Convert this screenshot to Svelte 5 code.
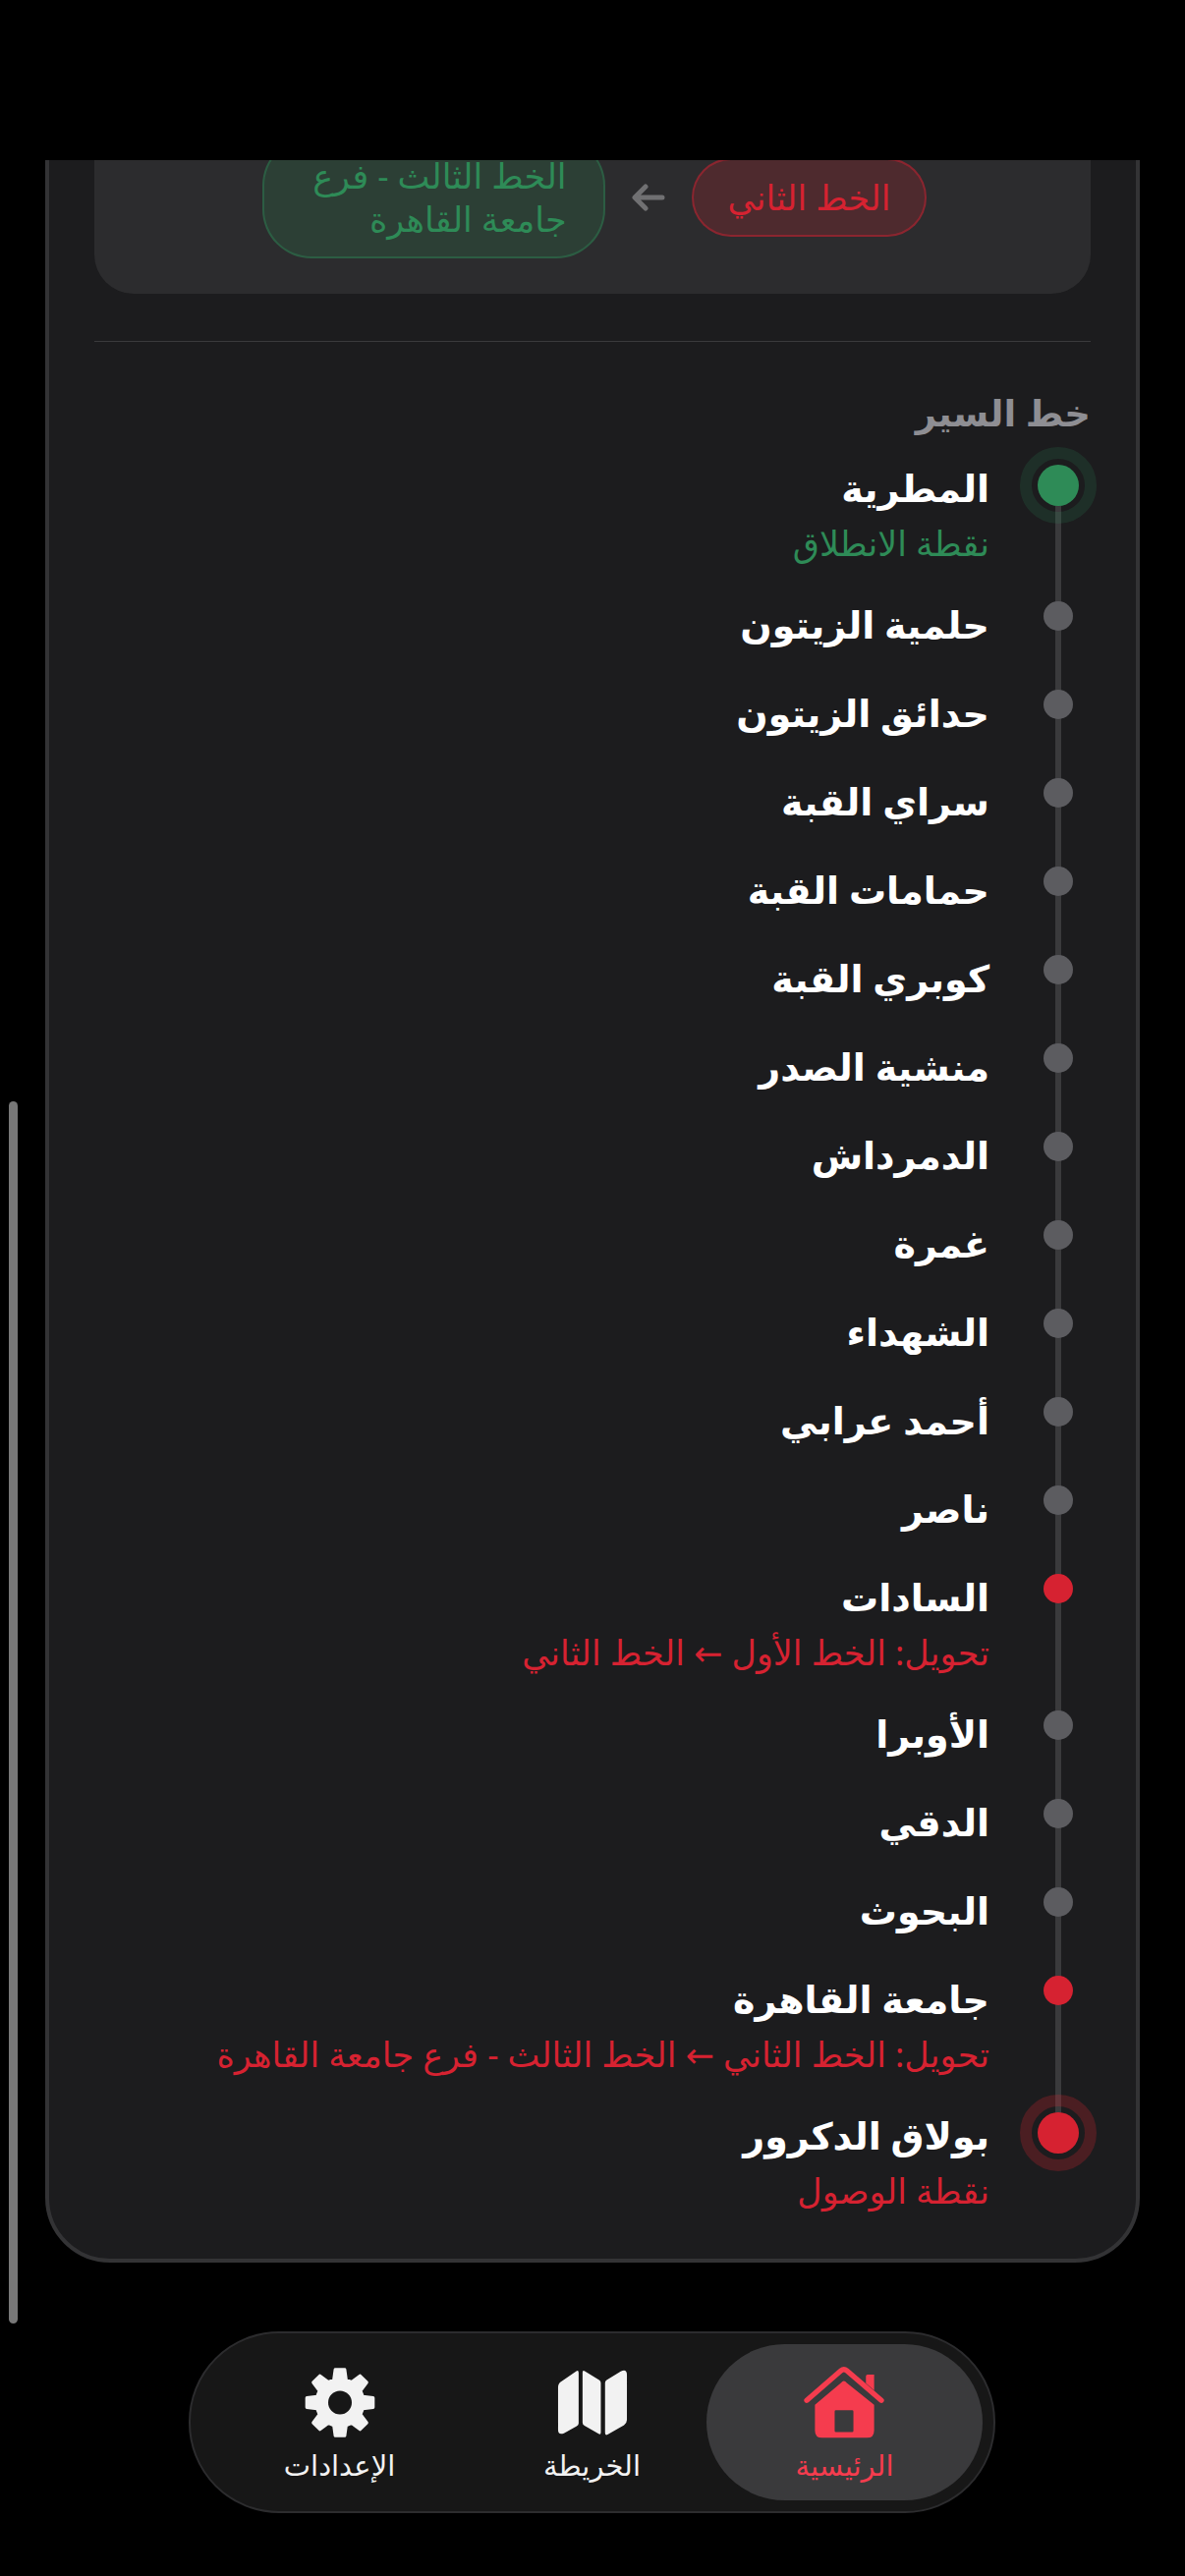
<script lang="ts">
	type Kind = 'start' | 'normal' | 'transfer' | 'end';

	interface Station {
		name: string;
		kind?: Kind;
		note?: string;
	}

	const stations: Station[] = [
		{ name: 'المطرية', kind: 'start', note: 'نقطة الانطلاق' },
		{ name: 'حلمية الزيتون' },
		{ name: 'حدائق الزيتون' },
		{ name: 'سراي القبة' },
		{ name: 'حمامات القبة' },
		{ name: 'كوبري القبة' },
		{ name: 'منشية الصدر' },
		{ name: 'الدمرداش' },
		{ name: 'غمرة' },
		{ name: 'الشهداء' },
		{ name: 'أحمد عرابي' },
		{ name: 'ناصر' },
		{ name: 'السادات', kind: 'transfer', note: 'تحويل: الخط الأول ← الخط الثاني' },
		{ name: 'الأوبرا' },
		{ name: 'الدقي' },
		{ name: 'البحوث' },
		{ name: 'جامعة القاهرة', kind: 'transfer', note: 'تحويل: الخط الثاني ← الخط الثالث - فرع جامعة القاهرة' },
		{ name: 'بولاق الدكرور', kind: 'end', note: 'نقطة الوصول' }
	];

	// eight teeth, rounded off by the stroke on the path
	function gearPath(cx: number, cy: number, outer: number, root: number) {
		const pts: string[] = [];
		const at = (deg: number, r: number) => {
			const a = (deg * Math.PI) / 180;
			return `${(cx + r * Math.sin(a)).toFixed(1)} ${(cy - r * Math.cos(a)).toFixed(1)}`;
		};
		for (let k = 0; k < 8; k++) {
			const mid = k * 45;
			pts.push(at(mid - 15, root), at(mid - 8, outer), at(mid + 8, outer), at(mid + 15, root));
		}
		return `M${pts.join('L')}Z`;
	}

	const gear = gearPath(224, 165, 102, 72);
</script>

<div class="screen" dir="rtl">
	<div class="top-bar"></div>
	<div class="scroller">
		<section class="card">
			<div class="lines-panel">
				<span class="chip chip--red">الخط الثاني</span>
				<svg class="chip-arrow" viewBox="0 0 34 28" width="34" height="28" aria-hidden="true">
					<path d="M31 14H4M14 3 3 14l11 11" fill="none" stroke="currentColor" stroke-width="5" stroke-linecap="round" stroke-linejoin="round" />
				</svg>
				<span class="chip chip--green">الخط الثالث - فرع<br />جامعة القاهرة</span>
			</div>
			<hr class="divider" />
			<h2 class="route-title">خط السير</h2>
			<ol class="route">
				{#each stations as s}
					<li class="stop" data-kind={s.kind ?? 'normal'}>
						<div class="rail">
							<span class="line"></span>
							<span class="dot"></span>
						</div>
						<div class="stop-text">
							<div class="stop-name">{s.name}</div>
							{#if s.note}<div class="stop-note">{s.note}</div>{/if}
						</div>
					</li>
				{/each}
			</ol>
		</section>
	</div>
	<i class="scroll-thumb"></i>
	<nav class="tabs">
		<div class="tab tab--active">
			<svg viewBox="110 50 260 230" width="87" height="77" aria-hidden="true">
				<path fill="currentColor" fill-rule="evenodd" d="M229 105 150 172V250Q150 272 172 272H308Q330 272 330 250V172L247 105Q238 93 229 105ZM214 188H263Q267 188 267 192V251Q267 255 263 255H214Q210 255 210 251V192Q210 188 214 188Z" />
				<path fill="none" stroke="currentColor" stroke-width="16" stroke-linecap="round" stroke-linejoin="round" d="M125 158 229 68Q238 60 247 68L352 158" />
				<path fill="currentColor" d="M305 85Q305 80 310 80H330V128L305 106Z" />
			</svg>
			<span>الرئيسية</span>
		</div>
		<div class="tab">
			<svg viewBox="94 50 247 230" width="82" height="77" aria-hidden="true">
				<path fill="currentColor" d="M175 74V228Q175 234 169 237L130 259Q112 266 112 248V118Q112 106 122 100L167 69Q175 64 175 74ZM187 72Q187 64 195 69L238 96Q243 99 243 105V257Q243 265 235 260L193 236Q187 233 187 227ZM256 105Q256 99 261 96L304 69Q323 60 323 80V218Q323 228 314 234L264 263Q256 267 256 258Z" />
			</svg>
			<span>الخريطة</span>
		</div>
		<div class="tab">
			<svg viewBox="110 50 228 230" width="76" height="77" aria-hidden="true">
				<path fill="currentColor" stroke="currentColor" stroke-width="10" stroke-linejoin="round" d={gear} />
				<circle cx="224" cy="165" r="36" fill="#171717" />
			</svg>
			<span>الإعدادات</span>
		</div>
	</nav>
</div>

<style>
	:global(body) {
		margin: 0;
		background: #000;
	}

	.screen {
		position: relative;
		display: flex;
		flex-direction: column;
		height: 2622px;
		overflow: hidden;
		background: #000;
		font-family: 'Noto Sans', 'DejaVu Sans', sans-serif;
		color: #fff;
	}

	.top-bar {
		flex: 0 0 163px;
		background: #000;
	}

	.scroller {
		flex: 1;
		min-height: 0;
		display: flex;
		flex-direction: column;
		justify-content: flex-end;
		overflow: hidden;
		padding: 0 46px 319px;
	}

	.card {
		flex: none;
		padding: 0 46px 10px;
		background: #1c1c1e;
		border: 4px solid #333335;
		border-radius: 66px;
	}

	.lines-panel {
		display: flex;
		align-items: center;
		justify-content: center;
		gap: 27px;
		padding: 100px 0 36px 4px;
		background: #2c2c2e;
		border-radius: 40px;
	}

	.chip {
		padding: 16px 35px;
		border-radius: 50px;
		font-size: 35px;
		line-height: 44px;
		border: 2px solid;
	}

	.chip--red {
		color: #d62231;
		background: rgb(214 34 49 / 20%);
		border-color: rgb(214 34 49 / 45%);
	}

	.chip--green {
		flex: 0 0 349px;
		box-sizing: border-box;
		padding-right: 37px;
		color: #2e8b57;
		background: rgb(46 139 87 / 20%);
		border-color: rgb(46 139 87 / 40%);
	}

	.chip-arrow {
		color: #707072;
	}

	.divider {
		margin: 48px 0 0;
		border: 0;
		border-top: 1px solid #3a3a3c;
	}

	.route-title {
		margin: 47px 0 28px;
		font-size: 37px;
		line-height: 50px;
		font-weight: 700;
		color: #8e8e93;
	}

	.route {
		list-style: none;
		margin: 0;
		padding: 0;
	}

	.stop {
		display: flex;
		gap: 37px;
	}

	.rail {
		position: relative;
		flex: 0 0 66px;
		display: flex;
		justify-content: center;
		align-items: flex-start;
	}

	.line {
		position: absolute;
		top: 0;
		bottom: 0;
		right: 30px;
		width: 6px;
		background: #3a3a3c;
	}

	.stop:first-child .line {
		top: 21px;
	}

	.stop:last-child .line {
		bottom: auto;
		height: 21px;
	}

	.dot {
		position: relative;
		width: 30px;
		height: 30px;
		border-radius: 50%;
		background: #5c5c60;
	}

	.stop[data-kind='transfer'] .dot {
		background: #d62231;
	}

	.stop[data-kind='start'] .dot,
	.stop[data-kind='end'] .dot {
		width: 42px;
		height: 42px;
		background: #d62231;
	}

	.stop[data-kind='start'] .dot {
		background: #2e8b57;
	}

	.stop[data-kind='start'] .dot::before,
	.stop[data-kind='end'] .dot::before {
		content: '';
		position: absolute;
		inset: -18px;
		border: 12px solid rgb(214 34 49 / 25%);
		border-radius: 50%;
	}

	.stop[data-kind='start'] .dot::before {
		border-color: rgb(46 139 87 / 18%);
	}

	.stop-text {
		padding-bottom: 40px;
	}

	.stop-name {
		margin: -2px 0 2px;
		font-size: 38px;
		line-height: 50px;
		font-weight: 700;
	}

	.stop-note {
		font-size: 35px;
		line-height: 60px;
		margin-bottom: -11px;
	}

	.stop[data-kind='start'] .stop-note {
		color: #2e8b57;
	}

	.stop[data-kind='transfer'] .stop-note,
	.stop[data-kind='end'] .stop-note {
		color: #d62231;
	}

	.scroll-thumb {
		position: absolute;
		left: 9px;
		top: 1121px;
		width: 9px;
		height: 1244px;
		border-radius: 5px;
		background: #787878;
	}

	.tabs {
		position: absolute;
		left: 192px;
		bottom: 64px;
		display: flex;
		width: 821px;
		height: 185px;
		box-sizing: border-box;
		padding: 11px;
		background: #171717;
		border: 2px solid #2c2c2e;
		border-radius: 92px;
	}

	.tab {
		flex: 1;
		display: flex;
		flex-direction: column;
		align-items: center;
		gap: 6px;
		padding-top: 21px;
		border-radius: 80px;
		color: #f2f2f2;
		font-size: 29px;
		line-height: 38px;
	}

	.tab + .tab {
		margin-right: -24px;
	}

	.tab--active {
		background: #3a3a3c;
		color: #f53c4e;
	}
</style>
